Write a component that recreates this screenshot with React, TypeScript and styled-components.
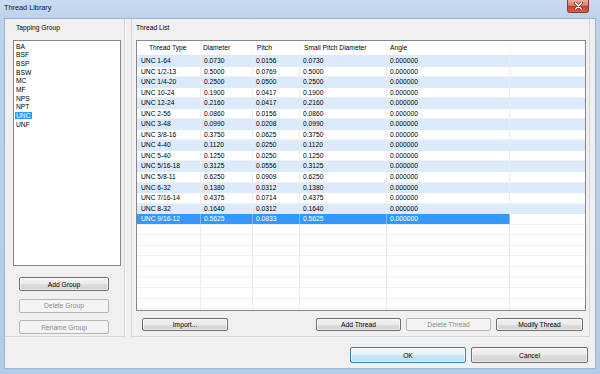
import styled, { createGlobalStyle } from "styled-components";

const GlobalStyle = createGlobalStyle`
  html, body {
    margin: 0;
    padding: 0;
  }
  body {
    font-family: "Liberation Sans", Arial, sans-serif;
    background: #b9d1ea;
  }
  * {
    box-sizing: border-box;
  }
`;

const Window = styled.div`
  width: 600px;
  height: 374px;
  display: flex;
  flex-direction: column;
  overflow: hidden;
  background: linear-gradient(180deg, #cadcf2 0%, #bcd3ee 18px, #b3cbe8 100%);
`;

const TitleBar = styled.div`
  height: 18px;
  flex-shrink: 0;
  display: flex;
  justify-content: space-between;
  align-items: flex-start;
  padding-left: 4px;
`;

const Title = styled.span`
  font-size: 7.3px;
  line-height: 16px;
  color: #111;
`;

const CloseButton = styled.div`
  width: 22px;
  height: 13px;
  margin-right: 11px;
  border: 1px solid #8a3a2c;
  border-top: none;
  border-radius: 0 0 3px 3px;
  background: linear-gradient(180deg, #eab1a3 0%, #d87a64 45%, #c2432a 52%, #d6603f 100%);
  display: flex;
  align-items: center;
  justify-content: center;
`;

const Client = styled.div`
  flex: 1;
  margin: 0 4px 5px 4px;
  border: 1px solid #9fb3cb;
  background: #f0f0f0;
  display: flex;
  flex-direction: column;
`;

const Panes = styled.div`
  height: 318px;
  display: flex;
  gap: 6px;
  padding-right: 5px;
`;

const LeftPane = styled.div`
  width: 120px;
  display: flex;
  flex-direction: column;
  padding: 0 3px 0 8px;
  border-right: 1px solid #d5d5d5;
  border-bottom: 1px solid #d5d5d5;
  box-shadow: 1px 0 0 #fbfbfb;
`;

const RightPane = styled.div`
  flex: 1;
  display: flex;
  flex-direction: column;
  padding: 0 3px 0 4px;
  border-left: 1px solid #d5d5d5;
  border-right: 1px solid #d5d5d5;
  border-bottom: 1px solid #d5d5d5;
`;

const PaneLabel = styled.div<{ $indent?: number }>`
  height: 21px;
  padding-top: 5px;
  padding-left: ${(p) => p.$indent ?? 0}px;
  font-size: 6.7px;
  line-height: 8px;
  color: #000;
`;

const ListBox = styled.div`
  height: 226px;
  border: 1px solid #828790;
  background: #fff;
  padding: 1.5px 0 0 2px;
  font-size: 6.7px;
  color: #000;
`;

const ListItem = styled.div`
  height: 8.7px;
  line-height: 8.7px;
`;

const ItemText = styled.span<{ $selected?: boolean }>`
  padding: 0 1px;
  margin-left: -1px;
  background: ${(p) => (p.$selected ? "#3399ff" : "transparent")};
  color: ${(p) => (p.$selected ? "#fff" : "#000")};
`;

const GroupButtons = styled.div`
  display: flex;
  flex-direction: column;
  gap: 7.5px;
  margin-top: 11px;
  padding-left: 6px;
`;

const Button = styled.button<{ $w: number; $h?: number; $default?: boolean }>`
  width: ${(p) => p.$w}px;
  height: ${(p) => p.$h ?? 14}px;
  padding: 0;
  font-family: "Liberation Sans", Arial, sans-serif;
  font-size: 6.7px;
  color: #000;
  border-radius: 2px;
  border: 1px solid ${(p) => (p.$default ? "#3c7fb1" : "#707070")};
  background: ${(p) =>
    p.$default
      ? "linear-gradient(180deg, #edf7fd 0%, #dff1fc 50%, #c9e8fb 51%, #b5dff7 100%)"
      : "linear-gradient(180deg, #f3f3f3 0%, #ebebeb 50%, #dedede 51%, #d2d2d2 100%)"};
  box-shadow: inset 0 0 0 1px rgba(255, 255, 255, 0.6);
  flex-shrink: 0;

  &:disabled {
    border-color: #b3b7ba;
    background: #f4f4f4;
    color: #8a8a8a;
    box-shadow: none;
  }
`;

const Table = styled.div`
  height: 271px;
  border: 1px solid #828790;
  background: #fff;
  overflow: hidden;
  font-size: 6.7px;
  color: #000;
`;

const COLS = "64px 52px 47px 87px 123px 1fr";

const HeaderRow = styled.div`
  height: 15px;
  display: grid;
  grid-template-columns: ${COLS};
  border-bottom: 1px solid #e5e5e5;
  background: #fff;
`;

const HeaderCell = styled.div<{ $pad?: number }>`
  line-height: 14px;
  padding-left: ${(p) => p.$pad ?? 3}px;
  border-right: 1px solid #f6f6f6;
  white-space: nowrap;
`;

const Row = styled.div<{ $striped?: boolean }>`
  height: 10.55px;
  display: grid;
  grid-template-columns: ${COLS};
  background: ${(p) => (p.$striped ? "#dcebfc" : "#fff")};
  border-bottom: 1px solid ${(p) => (p.$striped ? "#dcebfc" : "#f1f1f1")};
`;

const Cell = styled.div<{ $first?: boolean; $selected?: boolean }>`
  line-height: 9.5px;
  padding-left: ${(p) => (p.$first ? 4 : 3)}px;
  white-space: nowrap;
  border-right: 1px solid ${(p) => (p.$selected ? "#7fbcf7" : "#ececec")};
  background: ${(p) => (p.$selected ? "#3399ff" : "transparent")};
  color: ${(p) => (p.$selected ? "#fff" : "#000")};
`;

const FillerCell = styled.div`
  background: transparent;
`;

const ThreadButtons = styled.div`
  margin-top: 7px;
  display: flex;
  gap: 5px;
  padding: 0 3px 0 6px;
`;

const Spacer = styled.div`
  flex: 1;
`;

const Footer = styled.div`
  flex: 1;
  display: flex;
  justify-content: flex-end;
  align-items: flex-start;
  gap: 5px;
  padding: 10px 7px 0 0;
`;

const groups = ["BA", "BSF", "BSP", "BSW", "MC", "MF", "NPS", "NPT", "UNC", "UNF"];

const threads: [string, string, string, string, string][] = [
  ["UNC 1-64", "0.0730", "0.0156", "0.0730", "0.000000"],
  ["UNC 1/2-13", "0.5000", "0.0769", "0.5000", "0.000000"],
  ["UNC 1/4-20", "0.2500", "0.0500", "0.2500", "0.000000"],
  ["UNC 10-24", "0.1900", "0.0417", "0.1900", "0.000000"],
  ["UNC 12-24", "0.2160", "0.0417", "0.2160", "0.000000"],
  ["UNC 2-56", "0.0860", "0.0156", "0.0860", "0.000000"],
  ["UNC 3-48", "0.0990", "0.0208", "0.0990", "0.000000"],
  ["UNC 3/8-16", "0.3750", "0.0625", "0.3750", "0.000000"],
  ["UNC 4-40", "0.1120", "0.0250", "0.1120", "0.000000"],
  ["UNC 5-40", "0.1250", "0.0250", "0.1250", "0.000000"],
  ["UNC 5/16-18", "0.3125", "0.0556", "0.3125", "0.000000"],
  ["UNC 5/8-11", "0.6250", "0.0909", "0.6250", "0.000000"],
  ["UNC 6-32", "0.1380", "0.0312", "0.1380", "0.000000"],
  ["UNC 7/16-14", "0.4375", "0.0714", "0.4375", "0.000000"],
  ["UNC 8-32", "0.1640", "0.0312", "0.1640", "0.000000"],
  ["UNC 9/16-12", "0.5625", "0.0833", "0.5625", "0.000000"],
];

const selectedThread = 15;

function CloseIcon() {
  return (
    <svg width="9" height="8" viewBox="0 0 9 8">
      <path d="M1.5 1 L7.5 7 M7.5 1 L1.5 7" stroke="#6b2a1e" strokeWidth="2.6" strokeLinecap="round" />
      <path d="M1.5 1 L7.5 7 M7.5 1 L1.5 7" stroke="#fff" strokeWidth="1.5" strokeLinecap="round" />
    </svg>
  );
}

export default function App() {
  return (
    <>
      <GlobalStyle />
      <Window>
        <TitleBar>
          <Title>Thread Library</Title>
          <CloseButton>
            <CloseIcon />
          </CloseButton>
        </TitleBar>
        <Client>
          <Panes>
            <LeftPane>
              <PaneLabel $indent={3}>Tapping Group</PaneLabel>
              <ListBox>
                {groups.map((g) => (
                  <ListItem key={g}>
                    <ItemText $selected={g === "UNC"}>{g}</ItemText>
                  </ListItem>
                ))}
              </ListBox>
              <GroupButtons>
                <Button $w={90}>Add Group</Button>
                <Button $w={90} disabled>
                  Delete Group
                </Button>
                <Button $w={90} disabled>
                  Rename Group
                </Button>
              </GroupButtons>
            </LeftPane>
            <RightPane>
              <PaneLabel>Thread List</PaneLabel>
              <Table>
                <HeaderRow>
                  <HeaderCell $pad={12}>Thread Type</HeaderCell>
                  <HeaderCell $pad={2}>Diameter</HeaderCell>
                  <HeaderCell $pad={4}>Pitch</HeaderCell>
                  <HeaderCell $pad={4}>Small Pitch Diameter</HeaderCell>
                  <HeaderCell $pad={3}>Angle</HeaderCell>
                  <HeaderCell />
                </HeaderRow>
                {threads.map((t, i) => {
                  const sel = i === selectedThread;
                  return (
                    <Row key={t[0]} $striped={!sel && i % 2 === 0}>
                      {t.map((v, j) => (
                        <Cell key={j} $first={j === 0} $selected={sel}>
                          {v}
                        </Cell>
                      ))}
                      <FillerCell />
                    </Row>
                  );
                })}
                {Array.from({ length: 9 }).map((_, i) => (
                  <Row key={"e" + i}>
                    <Cell $first />
                    <Cell />
                    <Cell />
                    <Cell />
                    <Cell />
                    <FillerCell />
                  </Row>
                ))}
              </Table>
              <ThreadButtons>
                <Button $w={86} $h={13}>
                  Import...
                </Button>
                <Spacer />
                <Button $w={85} $h={13}>
                  Add Thread
                </Button>
                <Button $w={85} $h={13} disabled>
                  Delete Thread
                </Button>
                <Button $w={87} $h={13}>
                  Modify Thread
                </Button>
              </ThreadButtons>
            </RightPane>
          </Panes>
          <Footer>
            <Button $w={116} $h={16} $default>
              OK
            </Button>
            <Button $w={117} $h={16}>
              Cancel
            </Button>
          </Footer>
        </Client>
      </Window>
    </>
  );
}
